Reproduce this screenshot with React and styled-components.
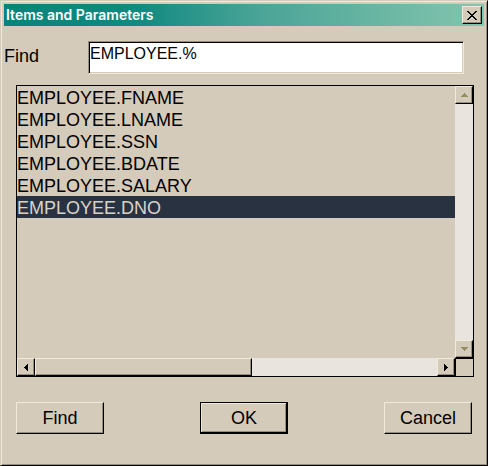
import React, { useState } from "react";
import styled, { createGlobalStyle } from "styled-components";

const face = "#d5cbba";
const light = "#f0e9dc";
const shadow = "#978e7d";
const track = "#e9e4dd";

const GlobalStyle = createGlobalStyle`
  * { box-sizing: border-box; }
  body { margin: 0; background: ${face}; }
  button, input { font: inherit; color: inherit; border-radius: 0; }
`;

const Dialog = styled.form`
  display: flex;
  flex-direction: column;
  min-height: 100vh;
  padding: 2px 1px 1px 2px;
  background: ${face};
  border: 1px solid #000;
  border-top-color: ${face};
  border-left-color: ${face};
  box-shadow: inset 1px 1px ${light}, inset -1px -1px ${shadow};
  color: #000;
  font: 18px/22px "Liberation Sans", Arial, sans-serif;
`;

const TitleBar = styled.header`
  display: flex;
  align-items: center;
  justify-content: space-between;
  height: 22px;
  margin: 1px 2px 0 1px;
  padding: 0 2px;
  background: linear-gradient(90deg, #078479 0%, #118a80 28%, #4aa497 53%, #84c5ad 100%);
  color: #fff;
`;

const Title = styled.h1`
  margin: 0;
  font: 600 14px/20px Inter, "Liberation Sans", sans-serif;
`;

const Raised = styled.button`
  display: flex;
  align-items: center;
  justify-content: center;
  padding: 0;
  background: ${face};
  border: 1px solid #000;
  border-top-color: ${light};
  border-left-color: ${light};
  box-shadow: inset -1px -1px ${shadow};
`;

const CloseButton = styled(Raised)`
  width: 20px;
  height: 18px;
`;

const FindRow = styled.div`
  display: flex;
  align-items: center;
  margin: 15px 22px 0 1px;
`;

const FindLabel = styled.label`
  width: 84px;
  padding-bottom: 4px;
`;

const FindInput = styled.input`
  flex: 1;
  min-width: 0;
  height: 33px;
  padding: 1px 1px 8px;
  background: #fff;
  border: 1px solid;
  border-color: ${shadow} ${light} ${light} ${shadow};
  box-shadow: inset 1px 1px #000, inset -1px -1px ${face};
  outline: 0;
  && { font-size: 16px; }
`;

const ListFrame = styled.div`
  display: grid;
  grid-template: minmax(272px, 1fr) 18px / minmax(0, 1fr) 18px;
  margin: 11px 12px 0 13px;
  border: 1px solid #000;
`;

const Items = styled.ul`
  margin: 0;
  padding: 0;
  list-style: none;
`;

const Item = styled.li`
  height: 22px;
  line-height: 24px;
  white-space: nowrap;
  cursor: default;
  background: ${(p) => (p.$selected ? "#293241" : "transparent")};
  color: ${(p) => (p.$selected ? "#d9d4c9" : "#000")};
`;

const ScrollBar = styled.div`
  display: flex;
  flex-direction: ${(p) => (p.$vertical ? "column" : "row")};
  justify-content: space-between;
  background: ${track};
`;

const ScrollTrack = styled.div`
  display: flex;
  flex: 1;
`;

const ScrollThumb = styled(Raised)`
  width: 54%;
`;

const ScrollButton = styled(Raised)`
  width: 18px;
  height: 18px;
`;

const Corner = styled.div`
  border: solid #000;
  border-width: 1px 0 0 1px;
`;

const Actions = styled.footer`
  display: flex;
  justify-content: space-between;
  margin: 25px 14px 30px 13px;
`;

const Action = styled(Raised)`
  width: 88px;
  height: 32px;
  border-color: ${(p) => (p.$primary ? "#000" : `${light} #000 #000 ${light}`)};
  box-shadow: ${(p) =>
    p.$primary
      ? `inset -1px -1px #000, inset 1px 1px ${light}, inset -2px -2px ${shadow}`
      : `inset -1px -1px ${shadow}`};
`;

const arrows = {
  up: "M4 0h1v1h1v1h1v1h1v1H1V3h1V2h1V1h1z",
  down: "M1 0h7v1H7v1H6v1H5v1H4V3H3V2H2V1H1z",
  left: "M4 0h1v7H4V6H3V5H2V4H1V3h1V2h1V1h1z",
  right: "M1 0h1v1h1v1h1v1h1v1H4v1H3v1H2v1H1z",
};

function Arrow({ direction, muted }) {
  const vertical = direction === "up" || direction === "down";
  return (
    <svg
      width={vertical ? 9 : 6}
      height={vertical ? 4 : 7}
      fill={muted ? "#978b62" : "#000"}
      shapeRendering="crispEdges"
      aria-hidden="true"
    >
      <path d={arrows[direction]} />
    </svg>
  );
}

const columns = ["FNAME", "LNAME", "SSN", "BDATE", "SALARY", "DNO"];

export default function App() {
  const [query, setQuery] = useState("EMPLOYEE.%");
  const [selected, setSelected] = useState("DNO");

  return (
    <>
      <GlobalStyle />
      <Dialog onSubmit={(e) => e.preventDefault()} aria-labelledby="title">
        <TitleBar>
          <Title id="title">Items and Parameters</Title>
          <CloseButton type="button" aria-label="Close">
            <svg width="10" height="9" shapeRendering="crispEdges" aria-hidden="true">
              <path d="M0 0h2v1h1v1h1v1h2V2h1V1h1V0h2v1H9v1H8v1H7v1H6v1h1v1h1v1h1v1h1v1H8V8H7V7H6V6H4v1H3v1H2v1H0V8h1V7h1V6h1V5h1V4H3V3H2V2H1V1H0z" />
            </svg>
          </CloseButton>
        </TitleBar>
        <FindRow>
          <FindLabel htmlFor="query">Find</FindLabel>
          <FindInput id="query" value={query} onChange={(e) => setQuery(e.target.value)} />
        </FindRow>
        <ListFrame>
          <Items role="listbox" aria-label="Items">
            {columns.map((name) => (
              <Item
                key={name}
                role="option"
                aria-selected={name === selected}
                $selected={name === selected}
                onClick={() => setSelected(name)}
              >
                EMPLOYEE.{name}
              </Item>
            ))}
          </Items>
          <ScrollBar $vertical>
            <ScrollButton type="button" aria-label="Scroll up" disabled>
              <Arrow direction="up" muted />
            </ScrollButton>
            <ScrollButton type="button" aria-label="Scroll down" disabled>
              <Arrow direction="down" muted />
            </ScrollButton>
          </ScrollBar>
          <ScrollBar>
            <ScrollButton type="button" aria-label="Scroll left">
              <Arrow direction="left" />
            </ScrollButton>
            <ScrollTrack>
              <ScrollThumb type="button" aria-label="Horizontal position" />
            </ScrollTrack>
            <ScrollButton type="button" aria-label="Scroll right">
              <Arrow direction="right" />
            </ScrollButton>
          </ScrollBar>
          <Corner />
        </ListFrame>
        <Actions>
          <Action type="button">Find</Action>
          <Action type="submit" $primary>OK</Action>
          <Action type="button">Cancel</Action>
        </Actions>
      </Dialog>
    </>
  );
}
